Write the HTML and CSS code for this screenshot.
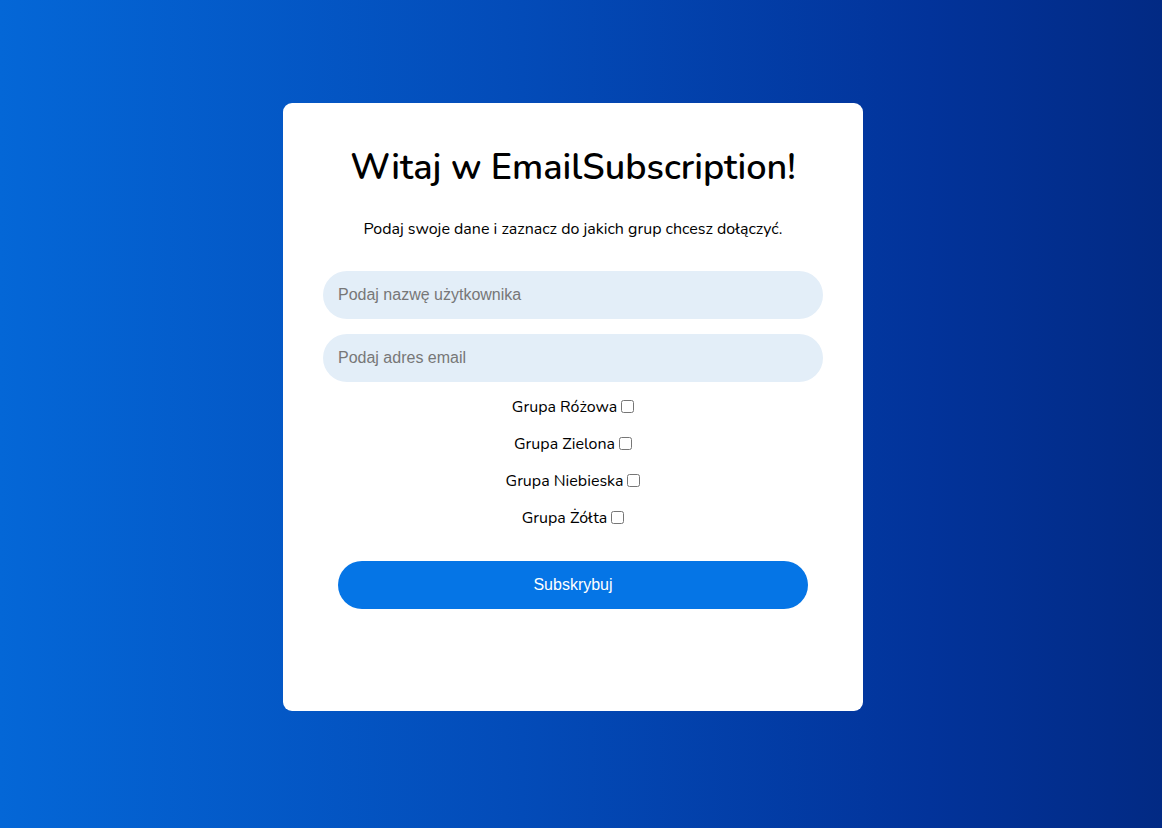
FILE: index.html
```html
<!DOCTYPE html>
<html lang="pl">
<head>
<meta charset="utf-8">
<title>EmailSubscription</title>
<link rel="stylesheet" href="styles.css">
</head>
<body>
<main class="page">
  <form class="card">
    <h1 class="title">Witaj w EmailSubscription!</h1>
    <p class="lead">Podaj swoje dane i zaznacz do jakich grup chcesz dołączyć.</p>
    <input class="field" type="text" placeholder="Podaj nazwę użytkownika">
    <input class="field" type="email" placeholder="Podaj adres email">
    <div class="groups">
      <label class="group">Grupa Różowa <input type="checkbox" class="check"></label>
      <label class="group">Grupa Zielona <input type="checkbox" class="check"></label>
      <label class="group">Grupa Niebieska <input type="checkbox" class="check"></label>
      <label class="group">Grupa Żółta <input type="checkbox" class="check"></label>
    </div>
    <button class="submit" type="button">Subskrybuj</button>
  </form>
</main>
</body>
</html>
```
FILE: styles.css
```css
html, body {
  margin: 0;
  height: 100%;
}
body {
  background: linear-gradient(to right, #0467d7 0%, #034bb8 45%, #02339a 80%, #022a84 100%);
  font-family: "Nunito", "Lato", "Noto Sans", sans-serif;
}
.page {
  box-sizing: border-box;
  height: 100%;
  display: flex;
  justify-content: flex-start;
  align-items: flex-start;
  padding: 103px 0 0 283px;
}
.card {
  box-sizing: border-box;
  width: 580px;
  height: 608px;
  background: #fff;
  border-radius: 9px;
  padding: 40px 40px 0;
  display: flex;
  flex-direction: column;
  align-items: center;
}
.title {
  margin: 0;
  font-size: 36px;
  font-weight: 600;
  line-height: 50px;
  color: #000;
}
.lead {
  margin: 25px 0 0;
  font-size: 16px;
  line-height: 22px;
  color: #000;
}
.field {
  box-sizing: border-box;
  width: 500px;
  height: 48px;
  border: none;
  border-radius: 24px;
  background: #e3eef8;
  padding: 0 15px;
  font-family: "Liberation Sans", Arial, sans-serif;
  font-size: 16px;
  color: #333;
  outline: none;
  margin-top: 15px;
}
.field:first-of-type {
  margin-top: 31px;
}
.field::placeholder {
  color: #777;
}
.groups {
  display: flex;
  flex-direction: column;
  align-items: center;
  gap: 15px;
  margin-top: 14px;
}
.group {
  font-size: 16px;
  line-height: 22px;
  color: #000;
  display: flex;
  align-items: center;
}
.check {
  width: 13px;
  height: 13px;
  margin: 0 0 2px 4px;
}
.submit {
  margin-top: 32px;
  width: 470px;
  height: 48px;
  border: none;
  border-radius: 24px;
  background: #0575e6;
  color: #fff;
  font-family: "Liberation Sans", Arial, sans-serif;
  font-size: 16px;
  cursor: pointer;
}
```
